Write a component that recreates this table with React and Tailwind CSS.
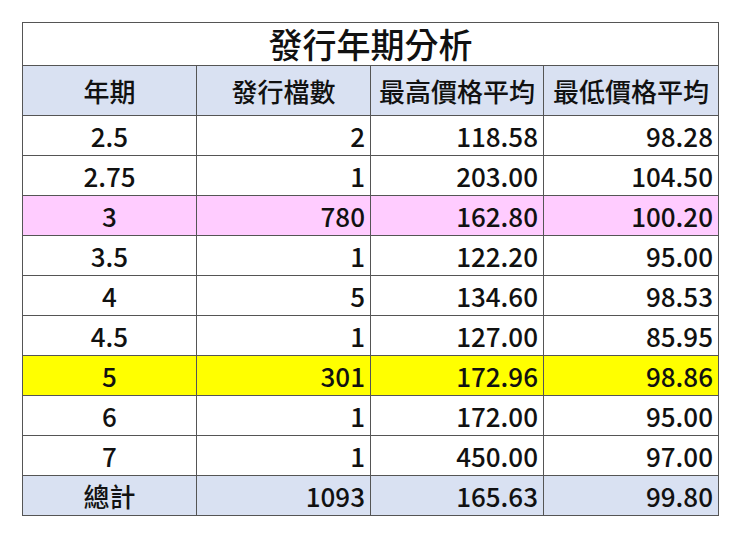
import React from 'react';

const rows = [
  { term: '2.5', count: '2', high: '118.58', low: '98.28' },
  { term: '2.75', count: '1', high: '203.00', low: '104.50' },
  { term: '3', count: '780', high: '162.80', low: '100.20', bg: 'bg-[#ffccff]' },
  { term: '3.5', count: '1', high: '122.20', low: '95.00' },
  { term: '4', count: '5', high: '134.60', low: '98.53' },
  { term: '4.5', count: '1', high: '127.00', low: '85.95' },
  { term: '5', count: '301', high: '172.96', low: '98.86', bg: 'bg-[#ffff00]' },
  { term: '6', count: '1', high: '172.00', low: '95.00' },
  { term: '7', count: '1', high: '450.00', low: '97.00' },
  { term: '總計', count: '1093', high: '165.63', low: '99.80', bg: 'bg-[#d9e1f2]' },
];

const cell = 'border border-[#555] px-[5px] h-[40px] leading-none';

export default function App() {
  return (
    <div className="w-[740px] h-[545px] bg-white pt-[22px] pl-[22px] font-['Noto_Sans_CJK_TC','Noto_Sans',sans-serif] text-[#111]">
      <table className="border-collapse table-fixed w-[696px] border-[1.5px] border-[#444]">
        <colgroup>
          <col className="w-[174px]" />
          <col className="w-[174px]" />
          <col className="w-[173px]" />
          <col className="w-[175px]" />
        </colgroup>
        <thead>
          <tr>
            <th colSpan={4} className="border border-[#555] h-[43px] text-[34px] font-medium leading-none text-center">
              發行年期分析
            </th>
          </tr>
          <tr className="bg-[#d9e1f2]">
            {['年期', '發行檔數', '最高價格平均', '最低價格平均'].map((h) => (
              <th key={h} className="border border-[#555] h-[50px] text-[26px] font-medium leading-none text-center">
                {h}
              </th>
            ))}
          </tr>
        </thead>
        <tbody className="text-[26px] font-medium">
          {rows.map((r) => (
            <tr key={r.term} className={r.bg || 'bg-white'}>
              <td className={`${cell} text-center`}>{r.term}</td>
              <td className={`${cell} text-right`}>{r.count}</td>
              <td className={`${cell} text-right`}>{r.high}</td>
              <td className={`${cell} text-right`}>{r.low}</td>
            </tr>
          ))}
        </tbody>
      </table>
    </div>
  );
}
